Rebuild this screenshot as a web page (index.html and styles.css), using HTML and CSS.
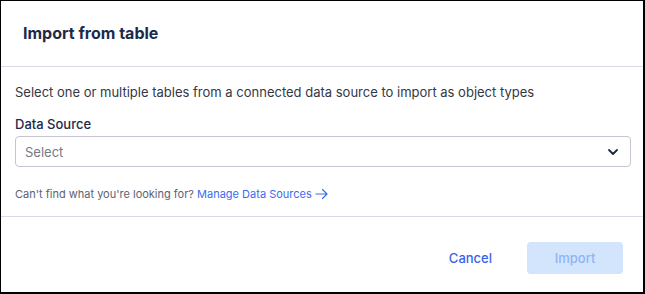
FILE: index.html
```html
<!DOCTYPE html>
<html>
<head>
<meta charset="utf-8">
<link rel="stylesheet" href="styles.css">
</head>
<body>
<div class="dialog">
  <div class="header"><h1 class="title">Import from table</h1></div>
  <div class="body">
    <p class="desc">Select one or multiple tables from a connected data source to import as object types</p>
    <label class="label">Data Source</label>
    <div class="select">
      <span class="placeholder">Select</span>
      <svg class="chev" width="12" height="8" viewBox="0 0 12 8"><path d="M2 2l4 4 4-4" fill="none" stroke="#1c2740" stroke-width="1.8" stroke-linecap="round" stroke-linejoin="round"/></svg>
    </div>
    <p class="help">Can't find what you're looking for? <a class="link">Manage Data Sources <svg class="arrow" width="14" height="12" viewBox="0 0 14 12"><path d="M1 6h11M7.5 1.5L12 6l-4.5 4.5" fill="none" stroke="#3b6cf0" stroke-width="1.2" stroke-linecap="round" stroke-linejoin="round"/></svg></a></p>
  </div>
  <div class="footer">
    <button class="btn cancel">Cancel</button>
    <button class="btn import">Import</button>
  </div>
</div>
</body>
</html>
```
FILE: styles.css
```css
html, body { margin: 0; padding: 0; background: #fff; }
body { font-family: Inter, "Noto Sans", sans-serif; }
.dialog {
  width: 645px; height: 294px; box-sizing: border-box;
  border-style: solid; border-color: #000;
  border-width: 1px 2px 2px 1px;
  display: flex; flex-direction: column;
}
.header {
  height: 66px; box-sizing: border-box;
  padding: 0 22px; display: flex; align-items: center;
  border-bottom: 1px solid #d9dae3;
}
.title { margin: 0; font-size: 16px; font-weight: 700; color: #1c2a4a; line-height: 20px; padding-bottom: 2px; }
.body {
  padding: 15px 12px 0 14px; border-bottom: 1px solid #d9dae3;
  height: 150px; box-sizing: border-box;
}
.desc { margin: 0; font-size: 13px; line-height: 20px; color: #333845; }
.label { display: block; margin-top: 12px; font-size: 13px; line-height: 20px; font-weight: 500; color: #1c2a4a; }
.select {
  margin-top: 2px; height: 31px; box-sizing: border-box;
  border: 1px solid #c4c5cf; border-radius: 4px;
  display: flex; align-items: center; justify-content: space-between;
  padding: 0 11px 0 9px;
}
.placeholder { font-size: 13px; color: #767a85; }
.chev { display: block; }
.help { margin: 19px 0 0; font-size: 11px; line-height: 16px; color: #5d6273; }
.link { color: #3b6cf0; display: inline-flex; align-items: center; gap: 3px; vertical-align: top; }
.arrow { display: block; }
.footer {
  flex: 1; display: flex; align-items: center; justify-content: flex-end;
  padding: 7px 20px 0 0; gap: 35px;
}
.btn { font-family: Inter, "Noto Sans", sans-serif; font-size: 13px; border: none; border-radius: 4px; height: 32px; cursor: pointer; }
.cancel { background: none; color: #3a62e8; padding: 0; font-weight: 500; }
.import { background: #d3e4fd; color: #8fb5f5; width: 96px; font-weight: 500; }
```
